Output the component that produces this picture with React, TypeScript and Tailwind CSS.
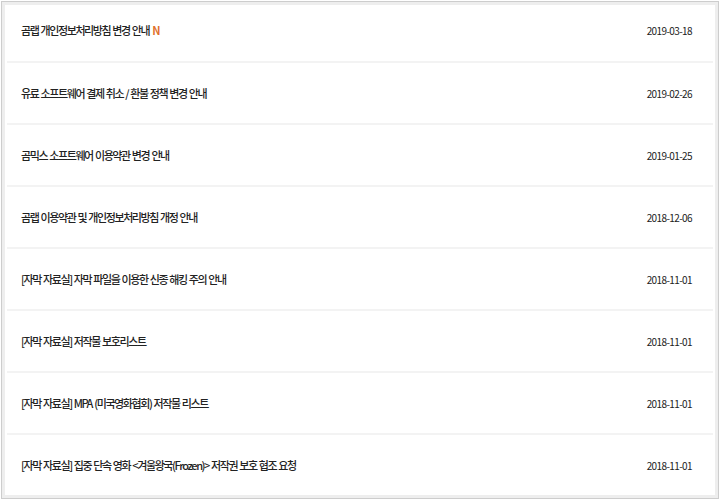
import React from "react";

const rows: { title: string; date: string; isNew?: boolean }[] = [
  { title: "곰랩 개인정보처리방침 변경 안내", date: "2019-03-18", isNew: true },
  { title: "유료 소프트웨어 결제 취소 / 환불 정책 변경 안내", date: "2019-02-26" },
  { title: "곰믹스 소프트웨어 이용약관 변경 안내", date: "2019-01-25" },
  { title: "곰랩 이용약관 및 개인정보처리방침 개정 안내", date: "2018-12-06" },
  { title: "[자막 자료실] 자막 파일을 이용한 신종 해킹 주의 안내", date: "2018-11-01" },
  { title: "[자막 자료실] 저작물 보호리스트", date: "2018-11-01" },
  { title: "[자막 자료실] MPA (미국영화협회) 저작물 리스트", date: "2018-11-01" },
  { title: "[자막 자료실] 집중 단속 영화 <겨울왕국(Frozen)> 저작권 보호 협조 요청", date: "2018-11-01" },
];

export default function App() {
  return (
    <div
      className="w-[720px] h-[502px] bg-white p-[1px] overflow-hidden"
      style={{ fontFamily: '"Noto Sans CJK KR", "Noto Sans", sans-serif' }}
    >
      <div className="h-[498px] border-[1px] border-[#cdcdcd] bg-[#eeeeee] p-[3px]">
        <div className="h-full bg-white px-[2px] overflow-hidden">
          {rows.map((r, i) => (
            <div
              key={i}
              className={`flex items-center justify-between border-b-[2px] border-[#f3f3f3] pl-[14px] pr-[21px] ${
                i === 0 ? "h-[58px] pb-[6px]" : i === rows.length - 1 ? "h-[62px] border-b-0" : "h-[62px]"
              }`}
            >
              <span className="text-[11px] font-medium text-[#222222] tracking-[-1.4px] [word-spacing:1px] whitespace-pre">
                {r.title}
                {r.isNew && (
                  <span className="ml-[3px] font-bold text-[#e0712c] tracking-normal">N</span>
                )}
              </span>
              <span className="text-[10px] text-[#222222] tracking-[-0.6px]">{r.date}</span>
            </div>
          ))}
        </div>
      </div>
    </div>
  );
}
